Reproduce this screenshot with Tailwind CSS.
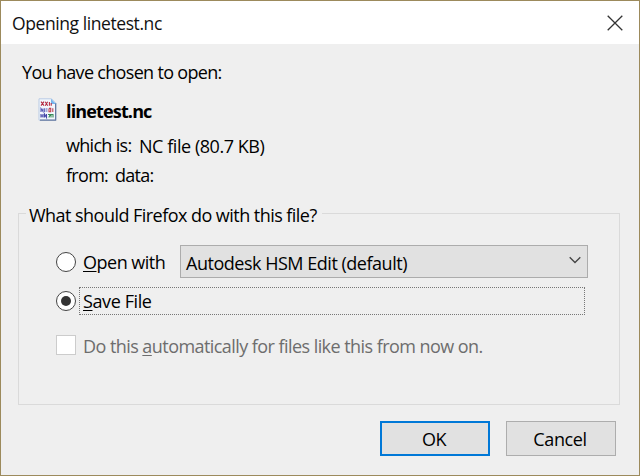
<!DOCTYPE html>
<html lang="en">
<head>
<meta charset="utf-8">
<title>Opening linetest.nc</title>
<script src="https://cdn.jsdelivr.net/npm/@tailwindcss/browser@4"></script>
</head>
<body class="overflow-hidden">
<main class="flex h-[476px] w-[640px] flex-col border border-[#9c8a5c] bg-[#efefef] font-['Open_Sans','Noto_Sans',sans-serif] text-[18px] leading-7 whitespace-nowrap text-black">
  <header class="flex h-[43px] shrink-0 items-center justify-between bg-white pr-4 pl-[11px]">
    <h1 class="text-[17.5px] tracking-[-0.42px] text-[#111]">Opening linetest.nc</h1>
    <svg class="size-4" viewBox="0 0 16 16" fill="none" stroke="#333" stroke-width="1.3"><path d="M.7.7 15.3 15.3M15.3.7.7 15.3"/></svg>
  </header>
  <section class="h-[144px] shrink-0 pl-[21px]">
    <p class="flex h-[54px] items-center pt-px tracking-[-0.68px]">You have chosen to open:</p>
    <div class="flex h-6 items-center pl-4">
      <svg class="mr-[9px] h-6 w-[19px]" viewBox="0 0 19 24">
        <path d="M1 .8h12.5L18 5.3v16.9H1z" fill="#f3f7fd" stroke="#b9cbe4" stroke-width="1"/>
        <path d="M17.6 5v17.2H2" fill="none" stroke="#66799f" stroke-width="1.2"/>
        <path d="M13 .8 18 6h-5z" fill="#76b5ed"/>
        <g fill="none" stroke-width="1.1">
          <path d="M3 3.7l3 4M6 3.7l-3 4M7.2 3.7l2.5 4M9.7 3.7l-2.5 4M11.4 4v3.7M13.2 5v2.7" stroke="#b52c43"/>
          <path d="M3 14v-3.5l2 3v-3M6.7 10.3V14M8 11h1.5M8 13h1.5" stroke="#5558b4"/>
          <path d="M11 10.4v3.4h1.7v-3.4H11M14.8 10.2V14" stroke="#c13f50"/>
          <path d="M3 16v3.5M5 16v3.5M3 18h2M6.5 19.5V16l2 3.5V16" stroke="#4547a9"/>
          <path d="M10 16.5h2.3l-1.5 3M13 19.5v-3h2v3" stroke="#388b58"/>
        </g>
      </svg>
      <strong class="pt-0.5 font-bold tracking-[-0.85px]">linetest.nc</strong>
    </div>
    <div class="mt-2 flex h-[30px] items-center pl-11">
      <span class="w-[73px] tracking-[-0.7px]">which is:</span><span class="pt-0.5 tracking-[-0.45px]">NC file (80.7 KB)</span>
    </div>
    <div class="flex h-7 items-center pl-11">
      <span class="w-[49px] pt-px tracking-[-0.7px]">from:</span><span class="pt-px tracking-[-0.75px]">data:</span>
    </div>
  </section>
  <section class="mt-[25px] ml-[17px] h-[192px] w-[602px] shrink-0 border border-[#dadada]">
    <h2 class="-mt-[13px] ml-[7px] h-7 w-[296px] bg-[#efefef] pl-[3px] tracking-[-0.54px]">What should Firefox do with this file?</h2>
    <div class="mt-4 flex h-[33px] items-center pl-[37px]">
      <span class="size-5 rounded-full border-[1.5px] border-[#444] bg-white"></span>
      <label class="ml-[7px] w-[97px] tracking-[-0.5px]"><span class="underline decoration-1 underline-offset-2">O</span>pen with</label>
      <div class="flex h-[33px] w-[408px] items-center justify-between border border-[#acacac] bg-[#e1e1e1] pr-1.5 pl-[5px]">
        <span class="pt-0.5 tracking-[-0.48px]">Autodesk HSM Edit (default)</span>
        <svg class="-mt-1 h-2 w-3" viewBox="0 0 12 8" fill="none" stroke="#444" stroke-width="1.3"><path d="m.7 1.2 5.3 5.3 5.3-5.3"/></svg>
      </div>
    </div>
    <div class="mt-[9px] flex h-7 items-center pl-[37px]">
      <span class="flex size-5 items-center justify-center rounded-full border-[1.5px] border-[#444] bg-white"><span class="size-2.5 rounded-full bg-[#333]"></span></span>
      <label class="ml-[3px] flex h-7 w-[506px] items-center border border-dotted border-[#777] pl-[3px] tracking-[-0.4px]"><span class="underline decoration-1 underline-offset-2">S</span>ave File</label>
    </div>
    <div class="mt-5 flex h-5 items-center pl-[37px] text-[#6d6d6d]">
      <span class="size-5 border border-[#ccc] bg-white"></span>
      <label class="ml-[7px] pt-0.5 tracking-[-0.56px]">Do this <span class="underline decoration-1 underline-offset-2">a</span>utomatically for files like this from now on.</label>
    </div>
  </section>
  <footer class="mt-4 flex justify-end gap-4 pr-[23px]">
    <button class="h-[35px] w-[110px] border-2 border-[#0078d7] bg-[#e1e1e1] pr-0.5 tracking-[-0.4px]">OK</button>
    <button class="h-[35px] w-[110px] border border-[#adadad] bg-[#e1e1e1] pr-0.5 tracking-[-0.4px]">Cancel</button>
  </footer>
</main>
</body>
</html>
